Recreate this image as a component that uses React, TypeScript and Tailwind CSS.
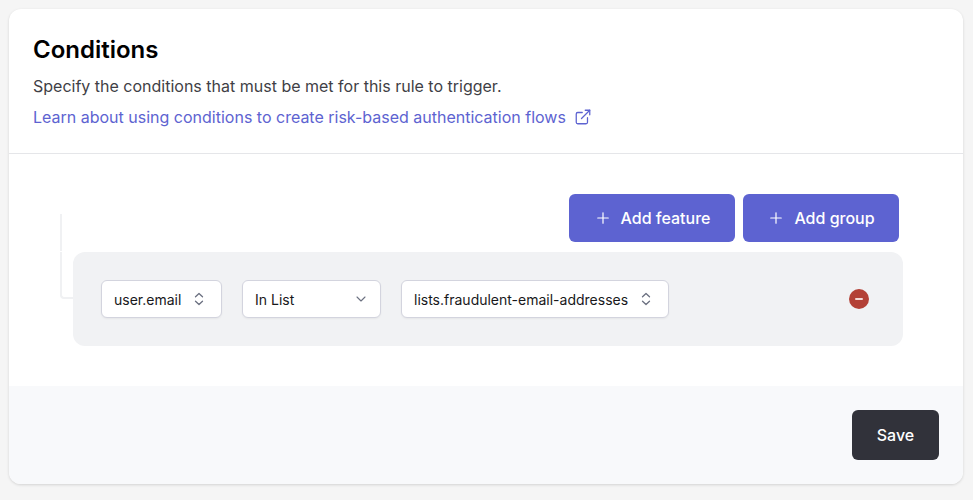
import React from 'react';
import { ChevronDown, ExternalLink, Plus } from 'lucide-react';

const font = { fontFamily: 'Inter, "Liberation Sans", sans-serif' };

const UpDown = () => (
  <svg width="16" height="16" viewBox="0 0 16 16" fill="none" stroke="#6b7080" strokeWidth="1.3" strokeLinecap="round" strokeLinejoin="round" className="shrink-0">
    <path d="M4.5 5.8 8 2.5l3.5 3.3" />
    <path d="M4.5 10.2 8 13.5l3.5-3.3" />
  </svg>
);

const App = () => {
  return (
    <div className="h-[500px] w-[973px] overflow-hidden bg-[#f5f5f5] p-[9px] pb-0" style={font}>
      <div className="h-[475px] w-[954px] overflow-hidden rounded-xl bg-white shadow-[0_1px_3px_rgba(0,0,0,0.14)]">
        {/* Header */}
        <div className="h-[145px] border-b border-[#e5e6e9] px-6 pt-[25px]">
          <h2 className="text-2xl leading-8 font-semibold text-black">Conditions</h2>
          <p className="mt-2 text-base leading-6 text-[#3f3f46]">
            Specify the conditions that must be met for this rule to trigger.
          </p>
          <a className="mt-[7px] flex items-center gap-2 text-base leading-6 text-[#5d63d1]">
            Learn about using conditions to create risk-based authentication flows
            <ExternalLink className="h-[18px] w-[18px]" strokeWidth={1.7} />
          </a>
        </div>

        {/* Builder */}
        <div className="relative h-[232px] pt-10 pr-[60px] pl-16">
          <div className="absolute top-[60px] left-[51px] h-[37px] w-0.5 bg-[#f0f1f3]" />
          <div className="absolute top-[98px] left-[51px] h-[47px] w-[13px] rounded-bl-sm border-b-2 border-l-2 border-[#f0f1f3]" />

          <div className="flex justify-end gap-2 pr-[4px]">
            <button className="flex h-12 w-[166px] items-center justify-center gap-[9px] rounded-md bg-[#5d63d1] text-base font-medium text-white">
              <Plus className="h-[18px] w-[18px]" strokeWidth={1.6} />
              Add feature
            </button>
            <button className="flex h-12 w-[156px] items-center justify-center gap-[9px] rounded-md bg-[#5d63d1] text-base font-medium text-white">
              <Plus className="h-[18px] w-[18px]" strokeWidth={1.6} />
              Add group
            </button>
          </div>

          <div className="mt-2.5 flex h-[94px] w-[830px] items-center rounded-xl bg-[#f1f2f4] pr-[34px] pl-7">
            <div className="flex h-[38px] w-[121px] items-center justify-between rounded-md border border-[#d3d4de] bg-white pr-3.5 pl-3 text-[14px] text-[#18181b] shadow-[0_1px_2px_rgba(0,0,0,0.05)]">
              user.email
              <UpDown />
            </div>
            <div className="ml-5 flex h-[38px] w-[139px] items-center justify-between rounded-md border border-[#d3d4de] bg-white pr-[11px] pl-3 text-[14px] text-[#18181b] shadow-[0_1px_2px_rgba(0,0,0,0.05)]">
              In List
              <ChevronDown className="h-4 w-4 text-[#6b7080]" strokeWidth={1.6} />
            </div>
            <div className="ml-5 flex h-[38px] w-[268px] items-center justify-between rounded-md border border-[#d3d4de] bg-white pr-3.5 pl-3 text-[14px] text-[#18181b] shadow-[0_1px_2px_rgba(0,0,0,0.05)]">
              lists.fraudulent-email-addresses
              <UpDown />
            </div>
            <button className="ml-auto flex h-5 w-5 items-center justify-center rounded-full bg-[#b34036]">
              <span className="h-0.5 w-2 rounded-sm bg-[#f3d9d6]" />
            </button>
          </div>
        </div>

        {/* Footer */}
        <div className="flex h-[98px] items-start justify-end bg-[#f8f9fb] px-6 pt-6">
          <button className="h-[50px] w-[87px] rounded-md bg-[#31323a] text-base font-medium text-white">Save</button>
        </div>
      </div>
    </div>
  );
};

export default App;
